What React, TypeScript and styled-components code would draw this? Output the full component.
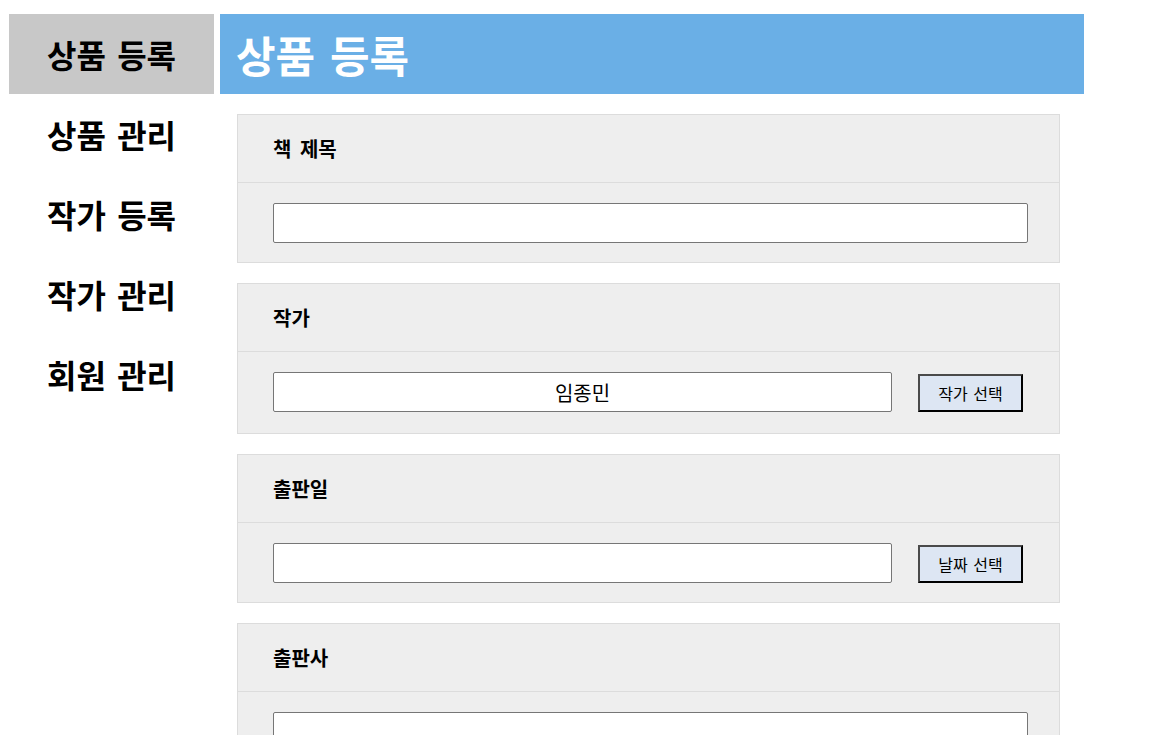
import React from "react";
import styled, {createGlobalStyle} from "styled-components";

const GlobalStyle = createGlobalStyle`
  html, body {
    margin: 0;
    padding: 0;
    background: white;
    font-family: "Noto Sans CJK KR", "Noto Sans", sans-serif;
  }
`;

const Page = styled.div`
  display: flex;
  align-items: flex-start;
  gap: 6px;
  padding: 14px 0 0 9px;
`;

const SideNav = styled.nav`
  width: 205px;
  display: flex;
  flex-direction: column;
`;

const NavItem = styled.div<{ $active?: boolean }>`
  height: 80px;
  display: flex;
  align-items: center;
  justify-content: center;
  font-size: 32px;
  font-weight: 700;
  word-spacing: 4px;
  color: #000;
  background: ${(props) => (props.$active ? "#c8c8c8" : "transparent")};
`;

const Main = styled.main`
  width: 864px;
  display: flex;
  flex-direction: column;
`;

const TitleBar = styled.header`
  height: 80px;
  background: #6aafe6;
  display: flex;
  align-items: center;
  padding-left: 16px;
  box-sizing: border-box;
  color: white;
  font-size: 43px;
  font-weight: 700;
  word-spacing: 5px;
`;

const Form = styled.div`
  display: flex;
  flex-direction: column;
  gap: 20px;
  margin: 20px 0 0 17px;
  width: 823px;
`;

const Card = styled.section`
  background: #eeeeee;
  border: 1px solid #dcdcdc;
`;

const CardHeader = styled.div`
  height: 67px;
  display: flex;
  align-items: center;
  padding-left: 35px;
  border-bottom: 1px solid #dcdcdc;
  font-size: 20px;
  font-weight: 700;
  word-spacing: 4px;
  color: #000;
`;

const CardBody = styled.div<{ $extra?: number }>`
  display: flex;
  align-items: center;
  gap: 26px;
  padding: 20px 31px ${(props) => 19 + (props.$extra || 0)}px 35px;
`;

const TextInput = styled.input<{ $short?: boolean }>`
  box-sizing: border-box;
  width: ${(props) => (props.$short ? "619px" : "755px")};
  height: 40px;
  border: 1px solid #767676;
  border-radius: 2px;
  background: white;
  font-family: "Noto Sans CJK KR", sans-serif;
  font-size: 20px;
  text-align: center;
  color: #000;
  outline: none;
`;

const PickButton = styled.button`
  box-sizing: border-box;
  width: 105px;
  height: 38px;
  margin-top: 2px;
  background: #dde6f3;
  border: 2px solid;
  border-color: #4a4a4a #000 #000 #4a4a4a;
  font-family: "Noto Sans CJK KR", sans-serif;
  font-size: 16px;
  word-spacing: 2px;
  color: #000;
  padding: 0;
`;

const navItems = ["상품 등록", "상품 관리", "작가 등록", "작가 관리", "회원 관리"];

export default function App() {
  return (
    <>
      <GlobalStyle/>
      <Page>
        <SideNav>
          {navItems.map((item, i) => (
            <NavItem key={item} $active={i === 0}>{item}</NavItem>
          ))}
        </SideNav>
        <Main>
          <TitleBar>상품 등록</TitleBar>
          <Form>
            <Card>
              <CardHeader>책 제목</CardHeader>
              <CardBody>
                <TextInput/>
              </CardBody>
            </Card>
            <Card>
              <CardHeader>작가</CardHeader>
              <CardBody $extra={2}>
                <TextInput $short defaultValue="임종민" readOnly/>
                <PickButton>작가 선택</PickButton>
              </CardBody>
            </Card>
            <Card>
              <CardHeader>출판일</CardHeader>
              <CardBody>
                <TextInput $short/>
                <PickButton>날짜 선택</PickButton>
              </CardBody>
            </Card>
            <Card>
              <CardHeader>출판사</CardHeader>
              <CardBody>
                <TextInput/>
              </CardBody>
            </Card>
          </Form>
        </Main>
      </Page>
    </>
  );
}
